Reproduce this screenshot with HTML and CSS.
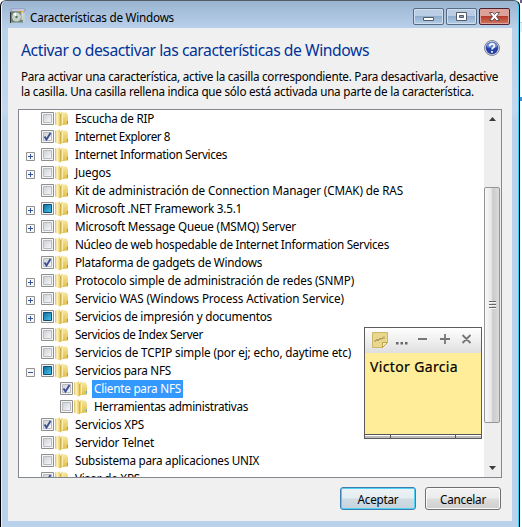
FILE: index.html
```html
<!DOCTYPE html>
<html lang="es">
<head>
<meta charset="utf-8">
<title>Características de Windows</title>
<link rel="stylesheet" href="styles.css">
</head>
<body>
<svg class="defs" width="0" height="0">
  <defs>
    <linearGradient id="gold" x1="0" x2="1"><stop offset="0" stop-color="#d9bd5c"/><stop offset=".4" stop-color="#fff6c4"/><stop offset="1" stop-color="#e8cb62"/></linearGradient>
    <linearGradient id="gold2" x1="0" x2="0" y1="0" y2="1"><stop offset="0" stop-color="#f6e7a0"/><stop offset="1" stop-color="#e0bd48"/></linearGradient>
    <linearGradient id="boxin" x1="0" y1="0" x2="1" y2="1"><stop offset="0" stop-color="#cbcfd5"/><stop offset="1" stop-color="#f8f8f8"/></linearGradient>
    <linearGradient id="fillin" x1="0" y1="0" x2="1" y2="1"><stop offset="0" stop-color="#0b6a9c"/><stop offset="1" stop-color="#48c8ee"/></linearGradient>
    <symbol id="folder" viewBox="0 0 14 16">
      <path d="M7 1.500h4.500L13 4v9.500L7 14z" fill="url(#gold2)"/>
      <path d="M0 1.500L5 .5V15.500L0 13.500z" fill="url(#gold)"/>
      <path d="M5 2.500L8 .5V13.500L5 15.500z" fill="#e9cf6b"/>
      <path d="M5.500 3V14.500" stroke="#c9a63f" stroke-width=".7"/>
      <path d="M7.500 1.500V13" stroke="#fff7c5" stroke-width=".8"/>
      <path d="M12.500 10v2.500" stroke="#58a3c0"/>
    </symbol>
    <symbol id="off" viewBox="0 0 13 13"><path d="M.5.5h12v12H.5z" fill="#f4f4f4" stroke="#8e8f8f"/><path d="M2.500 2.500h8v8h-8z" fill="url(#boxin)" stroke="#b9bdc3"/></symbol>
    <symbol id="on" viewBox="0 0 13 13"><use href="#off"/><path d="M3.500 6.500L5.500 9.500L9.500 3" fill="none" stroke="#3c4f93" stroke-width="1.900"/></symbol>
    <symbol id="part" viewBox="0 0 13 13"><path d="M.5.5h12v12H.5z" fill="#f4f4f4" stroke="#8e8f8f"/><path d="M2.500 2.500h8v8h-8z" fill="url(#fillin)" stroke="#124d73"/></symbol>
    <symbol id="plus" viewBox="0 0 9 9"><path d="M.5.5h8v8h-8z" fill="#f8f8f8" stroke="#919191"/><path d="M2 4.500h5M4.500 2v5" stroke="#34549f"/></symbol>
    <symbol id="minus" viewBox="0 0 9 9"><path d="M.5.5h8v8h-8z" fill="#f8f8f8" stroke="#919191"/><path d="M2 4.500h5" stroke="#34549f"/></symbol>
  </defs>
</svg>
<div class="window">
  <header class="titlebar">
    <svg class="app-icon" width="16" height="16" viewBox="0 0 16 16">
      <path d="M1 1h14v2H1z" fill="#f0f0f5" stroke="#8784b5" stroke-width=".8"/>
      <path d="M8 3h6v6H8z" fill="#f3bb20"/><path d="M12 5h3v9h-3z" fill="#c7cdd6"/>
      <path d="M.5 3.500h11l1.500 11H.5z" fill="#708474"/>
      <circle cx="6.500" cy="9" r="4.500" fill="#c8d3cd"/><path d="M6.500 9L3 6a5 5 0 0 1 3-1.500z" fill="#fff"/><circle cx="6.500" cy="9" r="1.200" fill="#59705e"/>
      <path d="M.5 4v11" stroke="#333"/><path d="M12 4v8" stroke="#eef"/>
    </svg>
    <span class="caption" data-width="144">Características de Windows</span>
    <div class="controls">
      <span class="control"><svg width="29" height="15"><path d="M9.500 8.500h10v3h-10z" fill="#fff" stroke="#555b68"/></svg></span>
      <span class="control"><svg width="29" height="15"><path d="M9.500 3.500h10v8h-10z" fill="#fff" stroke="#555b68"/><path d="M12.500 6.500h4v2h-4z" fill="#8ba9c9" stroke="#555b68"/></svg></span>
      <span class="control close"><svg width="29" height="15"><path d="M9.500 3.500h3.200l1.800 2 1.800-2h3.200L16.500 7.500l3 4h-3.200l-1.800-2-1.800 2H9.500l3-4z" fill="#fff" stroke="#64505a"/></svg></span>
    </div>
  </header>
  <main class="client">
    <div class="heading">
      <h1><span data-width="348">Activar o desactivar las características de Windows</span></h1>
      <svg class="help" width="16" height="16" viewBox="0 0 16 16">
        <circle cx="8" cy="8" r="7.500" fill="#d5d9e2" stroke="#858994"/><circle cx="8" cy="8" r="6.200" fill="#2643a5"/>
        <path d="M2.500 7a5.500 5 0 0 1 11 0Q8 9 2.500 7z" fill="#6e8bd2"/>
        <path d="M5.600 6.200C5.600 3 10.500 3.200 10.400 6C10.400 7.600 8 7.800 8 9.600M8 11v1.700" fill="none" stroke="#fff" stroke-width="1.700"/>
      </svg>
    </div>
    <p class="intro"><span data-width="477">Para activar una característica, active la casilla correspondiente. Para desactivarla, desactive</span> <span data-width="453">la casilla. Una casilla rellena indica que sólo está activada una parte de la característica.</span></p>
    <section class="list">
      <div class="rows" id="rows"></div>
      <div class="scroll">
        <svg class="arrow" width="7" height="4"><path d="M0 4L3.500 0L7 4z" fill="#3c3c3c"/></svg>
        <div class="thumb"><i></i><i></i><i></i></div>
        <svg class="arrow" width="7" height="4"><path d="M0 0L3.500 4L7 0z" fill="#3c3c3c"/></svg>
      </div>
    </section>
    <footer class="actions">
      <button class="default"><span data-width="41">Aceptar</span></button>
      <button><span data-width="46">Cancelar</span></button>
    </footer>
  </main>
</div>
<div class="behind"></div>
<aside class="note">
  <div class="note-bar">
    <svg width="112" height="25" viewBox="0 0 112 25">
      <path d="M4.500 4.500h15v10l-5 5h-10z" fill="#ead78e" stroke="#cdb66c"/><path d="M19.500 14.500h-5v5z" fill="#fff1ae" stroke="#bea44e"/>
      <path d="M7 14l2-3 1 2 2-3 1 1 2-2 2 0M6 13l11-3" fill="none" stroke="#a8975a" stroke-width=".8"/>
      <path d="M28 14h2.500v2.500H28zM32.500 14H35v2.500h-2.500zM37 14h2.500v2.500H37z" fill="#666"/>
      <path d="M50 11h9M72 11h10M77 6v10M94.500 7l8 8M102.500 7l-8 8" stroke="#777" stroke-width="1.800" fill="none"/>
    </svg>
  </div>
  <div class="note-text"><span data-width="88">Victor Garcia</span></div>
  <div class="note-foot"><i></i><i></i><i></i></div>
</aside>
<script src="app.js"></script>
</body>
</html>
```
FILE: app.js
```js
// [label, text width, checkbox state, expander, nested, selected]
const features = [
  ['Escucha de RIP', 79, 'off'],
  ['Internet Explorer 8', 95, 'on'],
  ['Internet Information Services', 152, 'off', 'plus'],
  ['Juegos', 36, 'off', 'plus'],
  ['Kit de administración de Connection Manager (CMAK) de RAS', 328, 'off'],
  ['Microsoft .NET Framework 3.5.1', 167, 'part', 'plus'],
  ['Microsoft Message Queue (MSMQ) Server', 221, 'off', 'plus'],
  ['Núcleo de web hospedable de Internet Information Services', 314, 'off'],
  ['Plataforma de gadgets de Windows', 187, 'on'],
  ['Protocolo simple de administración de redes (SNMP)', 279, 'off', 'plus'],
  ['Servicio WAS (Windows Process Activation Service)', 269, 'off', 'plus'],
  ['Servicios de impresión y documentos', 197, 'part', 'plus'],
  ['Servicios de Index Server', 128, 'off'],
  ['Servicios de TCPIP simple (por ej; echo, daytime etc)', 276, 'off'],
  ['Servicios para NFS', 96, 'part', 'minus'],
  ['Cliente para NFS', 87, 'on', '', true, true],
  ['Herramientas administrativas', 154, 'off', '', true],
  ['Servicios XPS', 69, 'on'],
  ['Servidor Telnet', 79, 'off'],
  ['Subsistema para aplicaciones UNIX', 184, 'off'],
  ['Visor de XPS', 65, 'on']
];
document.getElementById('rows').innerHTML = features.map(([label, width, state, expander, nested, selected]) =>
  `<div class="row${nested ? ' nested' : ''}">
    <span class="expander">${expander ? `<svg width="9" height="9"><use href="#${expander}"/></svg>` : ''}</span>
    <svg class="check" width="13" height="13"><use href="#${state}"/></svg>
    <svg class="folder" width="14" height="16"><use href="#folder"/></svg>
    <span class="label${selected ? ' selected' : ''}"><span data-width="${width}">${label}</span></span>
  </div>`).join('');

// Tracks each text so that it fills its stated width.
document.querySelectorAll('[data-width]').forEach(el => {
  const spare = Number(el.dataset.width) - el.getBoundingClientRect().width;
  el.style.letterSpacing = spare / el.textContent.length + 'px';
});
```
FILE: styles.css
```css
* { box-sizing: border-box; }
body { margin: 0; width: 522px; height: 527px; overflow: hidden; display: flex; background: #fff; color: #000; font: 11.7px/18px "Noto Sans", "Open Sans", sans-serif; }
svg { display: block; flex: none; }
.defs { position: absolute; }
[data-width] { white-space: nowrap; }
.window { width: 520px; height: 527px; flex: none; padding: 0 6px 0 7px; border-left: 1px solid #000; border-right: 1px solid #000; border-top: 1px solid #555f68; border-radius: 6px 6px 0 0; background: linear-gradient(#9ab4d1, #bad1ea 28px, #c3d8ef 110px, #b9d1ea 120px); box-shadow: inset 1px 0 #e5f2ff, inset -1px 0 #35d0f5; }
.titlebar { height: 27px; display: flex; align-items: flex-start; padding-left: 2px; }
.app-icon { margin-top: 7px; }
.caption { margin: 7px 0 0 4px; }
.controls { display: flex; gap: 2px; margin: 7px 3px 0 auto; }
.control { width: 31px; height: 17px; border: 1px solid #596a83; border-radius: 2px; box-shadow: inset 0 0 0 1px #d0deee; background: linear-gradient(#b9cde4 45%, #8fadcc 50%, #b4cee8); }
.control.close { border-color: #502030; box-shadow: inset 0 0 0 1px #dca69c; background: linear-gradient(#dda197 45%, #b43c2a 50%, #d07860); }
.client { height: 493px; width: 504px; background: #f0f0f0; padding: 8px 10px 0; display: flex; flex-direction: column; }
.heading { display: flex; justify-content: space-between; height: 31px; padding: 1px 2px 0 3px; }
h1 { margin: 1px 0 0; font-size: 15.7px; line-height: 24px; font-weight: 400; color: #003399; }
.help { margin-top: 3px; }
.intro { margin: 0 0 0 3px; line-height: 15px; height: 42px; padding-top: 2px; display: flex; flex-direction: column; align-items: flex-start; }
.list { width: 484px; height: 369px; border: 1px solid #828790; background: #fff; display: flex; }
.rows { flex: 1; overflow: hidden; }
.row { height: 18px; display: flex; align-items: flex-start; padding-left: 7px; }
.expander { width: 15px; padding-top: 6px; }
.nested .expander { width: 34px; }
.check { margin: 2px 1px 0 0; }
.folder { margin-top: 1px; }
.label { margin-left: 4px; padding: 0 1px 0 2px; height: 18px; line-height: 17px; white-space: nowrap; }
.selected { background: #3399ff; color: #fff; padding-right: 2px; }
.scroll { width: 17px; background: #eee; display: flex; flex-direction: column; align-items: center; justify-content: space-between; padding: 7px 1px 7px 0; }
.thumb { width: 16px; height: 236px; margin: 54px 0 31px; border: 1px solid #959595; border-radius: 2px; background: linear-gradient(90deg, #f8f8f8, #e8e8e8 45%, #c9cbcd 55%, #dcdcdc); display: flex; flex-direction: column; align-items: center; justify-content: center; gap: 1px; }
.thumb i { width: 7px; height: 2px; border-top: 1px solid #666; background: #f6f6f6; }
.actions { display: flex; justify-content: flex-end; gap: 9px; padding: 9px 1px 0 0; }
button { width: 76px; height: 23px; padding: 0; font: 11.7px/18px "Noto Sans", "Open Sans", sans-serif; color: #000; border: 1px solid #707070; border-radius: 3px; background: linear-gradient(#f3f3f3, #ebebeb 49%, #dddddd 51%, #cfcfcf); box-shadow: inset 0 0 0 1px #fbfbfb; }
.default { border-color: #3c7fb1; box-shadow: inset 0 0 0 1px #4fd0f4; background: linear-gradient(#eef3f5, #e3edf1 49%, #cfdce3 51%, #c8d4db); }
.behind { width: 2px; height: 527px; background: linear-gradient(#667 0 3px, #fff 3px 22px, #c7cdd3 22px 23px, #e6ebef 23px 32px, #fff 32px 97px, #3a8ed5 97px 101px, #fff 101px); }
.note { position: absolute; left: 364px; top: 327px; width: 118px; height: 112px; border: 1px solid #5c5c5c; background: #ffed99; display: flex; flex-direction: column; }
.note-bar { height: 25px; padding-left: 3px; background: linear-gradient(#fff, #dfdfdf); }
.note-text { flex: 1; padding: 4px 0 0 5px; font-size: 14px; line-height: 20px; -webkit-text-stroke: .2px #000; }
.note-foot { height: 4px; display: flex; gap: 1px; background: #555; border-top: 1px solid #555; }
.note-foot i { background: #bbb; border-top: 1px solid #fff; width: 25px; }
.note-foot i:nth-child(2) { flex: 1; }
```
